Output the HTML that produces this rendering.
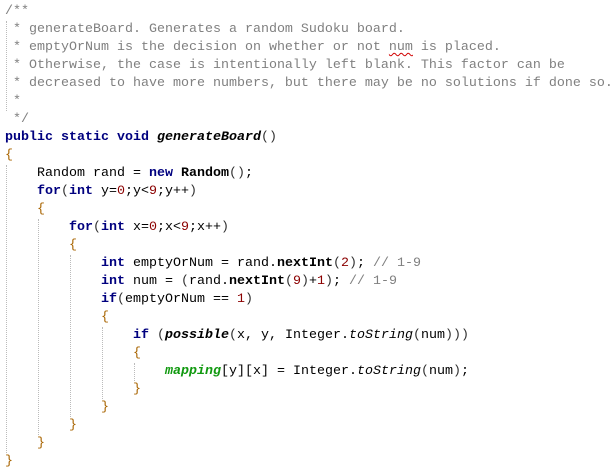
<!DOCTYPE html>
<html><head><meta charset="utf-8"><style>
html,body{margin:0;padding:0;background:#fff;width:613px;height:473px;overflow:hidden}
#c{position:relative;font-family:"Liberation Mono","Courier New",monospace;font-size:13.33px;color:#000;padding-top:3px}
.l{height:18px;line-height:18px;white-space:pre;padding-left:5px}
.cm{color:#808080}
.k{color:#00007f;font-weight:bold}
.m{font-weight:bold}
.mi{font-weight:bold;font-style:italic}
.si{font-style:italic}
.n{color:#8b0000}
.b{color:#a86400}
.g{color:#10990f;font-style:italic;font-weight:bold}
.p{color:#333}
.sq{text-decoration:underline wavy #d00000;text-decoration-thickness:1px;text-underline-offset:2px}
.gd{position:absolute;width:0;border-left:1px dotted #bbb}
</style></head><body><div id="c">
<div class="gd" style="left:6px;top:21px;height:90px"></div>
<div class="gd" style="left:6px;top:165px;height:288px"></div>
<div class="gd" style="left:38px;top:219px;height:216px"></div>
<div class="gd" style="left:70px;top:255px;height:162px"></div>
<div class="gd" style="left:102px;top:327px;height:72px"></div>
<div class="gd" style="left:134px;top:363px;height:18px"></div>
<div class="l cm">/**</div>
<div class="l cm"> * generateBoard. Generates a random Sudoku board.</div>
<div class="l cm"> * emptyOrNum is the decision on whether or not <span class="sq">num</span> is placed.</div>
<div class="l cm"> * Otherwise, the case is intentionally left blank. This factor can be</div>
<div class="l cm"> * decreased to have more numbers, but there may be no solutions if done so.</div>
<div class="l cm"> *</div>
<div class="l cm"> */</div>
<div class="l"><span class="k">public static void</span> <span class="mi">generateBoard</span><span class="p">()</span></div>
<div class="l"><span class="b">{</span></div>
<div class="l">    Random rand = <span class="k">new</span> <span class="m">Random</span><span class="p">()</span>;</div>
<div class="l">    <span class="k">for</span><span class="p">(</span><span class="k">int</span> y=<span class="n">0</span>;y&lt;<span class="n">9</span>;y++<span class="p">)</span></div>
<div class="l">    <span class="b">{</span></div>
<div class="l">        <span class="k">for</span><span class="p">(</span><span class="k">int</span> x=<span class="n">0</span>;x&lt;<span class="n">9</span>;x++<span class="p">)</span></div>
<div class="l">        <span class="b">{</span></div>
<div class="l">            <span class="k">int</span> emptyOrNum = rand.<span class="m">nextInt</span><span class="p">(</span><span class="n">2</span><span class="p">)</span>; <span class="cm">// 1-9</span></div>
<div class="l">            <span class="k">int</span> num = <span class="p">(</span>rand.<span class="m">nextInt</span><span class="p">(</span><span class="n">9</span><span class="p">)</span>+<span class="n">1</span><span class="p">)</span>; <span class="cm">// 1-9</span></div>
<div class="l">            <span class="k">if</span><span class="p">(</span>emptyOrNum == <span class="n">1</span><span class="p">)</span></div>
<div class="l">            <span class="b">{</span></div>
<div class="l">                <span class="k">if</span> <span class="p">(</span><span class="mi">possible</span><span class="p">(</span>x, y, Integer.<span class="si">toString</span><span class="p">(</span>num<span class="p">)))</span></div>
<div class="l">                <span class="b">{</span></div>
<div class="l">                    <span class="g">mapping</span>[y][x] = Integer.<span class="si">toString</span><span class="p">(</span>num<span class="p">)</span>;</div>
<div class="l">                <span class="b">}</span></div>
<div class="l">            <span class="b">}</span></div>
<div class="l">        <span class="b">}</span></div>
<div class="l">    <span class="b">}</span></div>
<div class="l"><span class="b">}</span></div>
</div></body></html>
